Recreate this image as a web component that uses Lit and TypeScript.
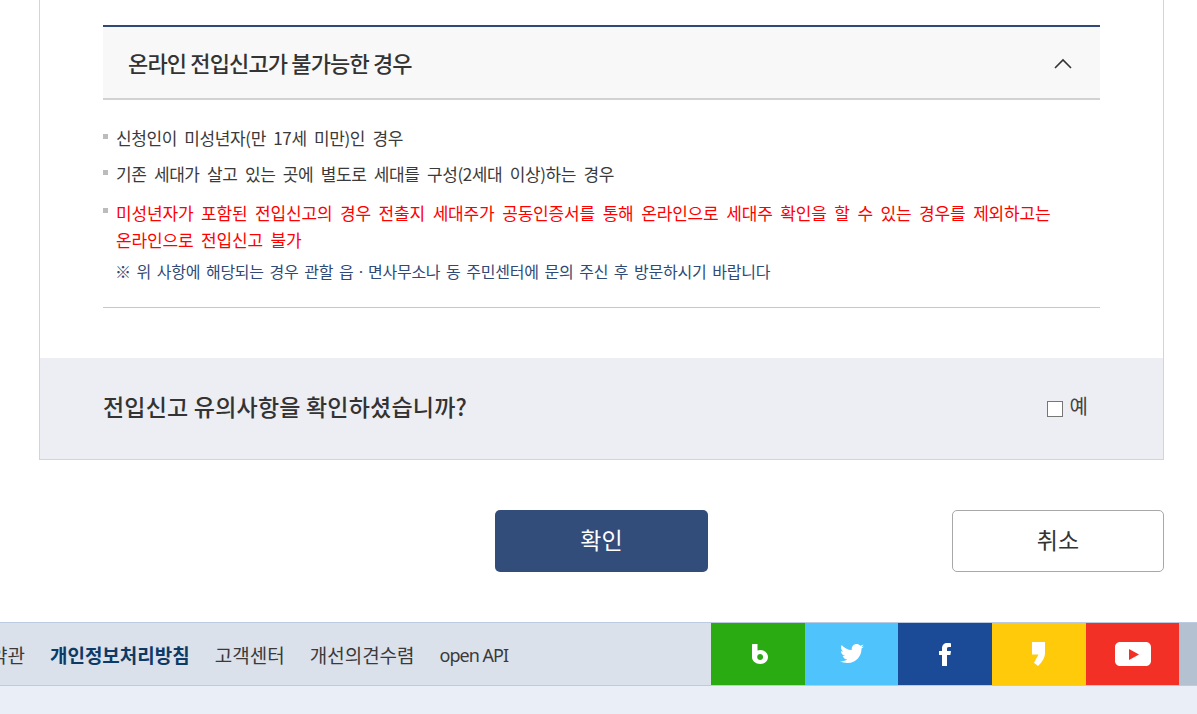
import { LitElement, html, css } from 'lit';
import { customElement } from 'lit/decorators.js';

const socials = [
  {
    color: '#2bab12',
    icon: html`<svg class="shift" width="16" height="20" viewBox="0 0 16 20"><path fill="#fff" fill-rule="evenodd" d="M1 0H5.500v6.500C6.300 6.200 7.200 6 8.100 6 12.500 6 16 9 16 13s-3.400 7-7.800 7C3.700 20 0 17.100 0 13V1C0 .4.400 0 1 0zM8.100 10C6.500 10 5.200 11.300 5.200 13s1.300 3 2.900 3 3-1.300 3-3-1.400-3-3-3z"/></svg>`,
  },
  {
    color: '#4fc3fb',
    icon: html`<svg width="24" height="20" viewBox="0 0 24 20"><path fill="#fff" d="M24 2.400c-.9.400-1.800.7-2.800.8 1-.6 1.800-1.600 2.200-2.700-1 .6-2 1-3.100 1.200C19.300.7 18 0 16.600 0c-2.700 0-4.900 2.200-4.900 4.900 0 .4 0 .8.100 1.100C7.700 5.800 4.100 3.900 1.700.9c-.4.700-.7 1.600-.7 2.500 0 1.700.9 3.200 2.200 4.100-.8 0-1.600-.2-2.200-.6v.1c0 2.400 1.700 4.400 3.900 4.800-.4.100-.8.200-1.300.2-.3 0-.6 0-.9-.1.600 2 2.400 3.400 4.600 3.400-1.700 1.300-3.800 2.100-6.100 2.100-.4 0-.8 0-1.200-.1C2.200 18.300 4.800 19 7.500 19c9.100 0 14-7.500 14-14v-.6c1-.7 1.800-1.500 2.500-2z"/></svg>`,
  },
  {
    color: '#1b4b97',
    icon: html`<svg width="12" height="23" viewBox="0 0 12 23"><path fill="#fff" d="M3 23V12H0V8h3V5.500C3 2 5 0 8.500 0c1.400 0 2.800.1 3.500.2v3.700H9.800C8.400 3.900 8 4.600 8 5.800V8h4l-.6 4H8v11z"/></svg>`,
  },
  {
    color: '#ffca09',
    icon: html`<svg width="13" height="24" viewBox="0 0 13 24"><path fill="#fff" d="M0 0h13v11c0 4.500-2.800 9-7 13l-4-3.200 4.500-8.300H0z"/></svg>`,
  },
  {
    color: '#f23026',
    icon: html`<svg width="36" height="24" viewBox="0 0 36 24"><path fill="#fff" fill-rule="evenodd" d="M5 0h26c2.800 0 5 2.200 5 5v14c0 2.800-2.200 5-5 5H5c-2.800 0-5-2.200-5-5V5c0-2.800 2.200-5 5-5zM14 7v11l10-5.500z"/></svg>`,
  },
];

@customElement('app-root')
export class AppRoot extends LitElement {
  static styles = css`
    :host {
      display: block;
      font-family: 'Noto Sans CJK KR', 'Noto Sans', sans-serif;
      color: #333;
      height: 714px;
      overflow: hidden;
      background: #fff;
    }

    .content {
      padding: 0 33px 0 39px;
    }

    .panel {
      border: 1px solid #d4d4d4;
      border-top: 0;
      padding-top: 25px;
    }

    .inner {
      margin: 0 63px;
    }

    .acc-head {
      height: 71px;
      border-top: 2px solid #2f4a77;
      border-bottom: 2px solid #d2d2d2;
      background: #f8f8f8;
      padding: 0 27px 0 25px;
      display: flex;
      align-items: center;
      justify-content: space-between;
    }

    .acc-head h3 {
      margin: 0 0 2px;
      font-size: 22px;
      line-height: 30px;
      font-weight: 500;
      letter-spacing: -0.85px;
    }

    .acc-body {
      border-bottom: 1px solid #c8c8c8;
      padding: 25px 0 23px;
    }

    ul {
      list-style: none;
      margin: 0;
      padding: 0;
    }

    li {
      position: relative;
      padding: 0 40px 0 13px;
      font-size: 17px;
      line-height: 26px;
      letter-spacing: -0.4px;
      word-spacing: 4px;
      word-break: keep-all;
      margin-bottom: 10px;
      color: #3a3a3a;
    }

    li::before {
      content: '';
      position: absolute;
      left: 0;
      top: 9px;
      width: 5px;
      height: 5px;
      background: #bcbcbc;
    }

    li.warn {
      color: #fe0000;
      line-height: 27px;
      letter-spacing: -0.17px;
      margin-top: 12px;
      margin-bottom: 5px;
    }

    .note {
      margin: 0 0 0 12px;
      font-size: 16px;
      line-height: 26px;
      letter-spacing: -0.24px;
      word-spacing: 2.4px;
      color: #2f4a77;
    }

    .confirm {
      margin-top: 50px;
      height: 95px;
      background: #edeef3;
      padding: 0 75px 6px 63px;
      display: flex;
      align-items: center;
      justify-content: space-between;
    }

    .confirm strong {
      font-size: 23px;
      font-weight: 500;
      letter-spacing: 0.2px;
    }

    .check {
      display: flex;
      align-items: center;
      gap: 7px;
      font-size: 20px;
      line-height: 28px;
      color: #444;
    }

    .box {
      width: 14px;
      height: 14px;
      border: 1px solid #767676;
      background: #fff;
      margin-top: 6px;
    }

    .actions {
      display: flex;
      justify-content: flex-end;
      gap: 244px;
      margin-top: 50px;
      height: 62px;
    }

    .btn {
      box-sizing: border-box;
      height: 62px;
      padding-bottom: 4px;
      border-radius: 5px;
      font: inherit;
      font-size: 23px;
      display: flex;
      align-items: center;
      justify-content: center;
    }

    .primary {
      width: 213px;
      background: #334d7a;
      color: #fff;
      border: 0;
    }

    .secondary {
      width: 212px;
      background: #fff;
      color: #333;
      border: 1px solid #a8a8a8;
    }

    .footer {
      margin-top: 50px;
      border-top: 1px solid #bccbe2;
      border-bottom: 1px solid #bccbe2;
      background: #dbe1eb;
      display: flex;
      height: 62px;
    }

    .links {
      width: 711px;
      flex: none;
      overflow: hidden;
      display: flex;
      justify-content: flex-end;
      align-items: center;
      gap: 25px;
      padding: 1px 203px 0 0;
      box-sizing: border-box;
      font-size: 19px;
      letter-spacing: 0;
      color: #3a3a3a;
      white-space: nowrap;
    }

    .links b {
      color: #0d3a66;
      font-weight: 700;
    }

    .links .api {
      font-family: 'Noto Sans', sans-serif;
      font-size: 18px;
      letter-spacing: -1px;
    }

    .social {
      display: grid;
      grid-template-columns: repeat(5, 93.7px);
    }

    .social a {
      display: flex;
      align-items: center;
      justify-content: center;
    }

    .shift {
      margin-left: 4px;
    }

    .rest {
      flex: 1;
      background: #b4c1d0;
    }

    .bottom {
      height: 28px;
      background: #e9eef7;
    }
  `;

  render() {
    return html`
      <div class="content">
        <section class="panel">
          <div class="inner">
            <div class="acc-head">
              <h3>온라인 전입신고가 불가능한 경우</h3>
              <svg width="20" height="14" viewBox="0 0 20 14">
                <path d="M2 12 L10 4 L18 12" fill="none" stroke="#333" stroke-width="1.6" />
              </svg>
            </div>
            <div class="acc-body">
              <ul>
                <li>신청인이 미성년자(만 17세 미만)인 경우</li>
                <li>기존 세대가 살고 있는 곳에 별도로 세대를 구성(2세대 이상)하는 경우</li>
                <li class="warn">
                  미성년자가 포함된 전입신고의 경우 전출지 세대주가 공동인증서를 통해 온라인으로 세대주 확인을 할 수 있는 경우를 제외하고는 온라인으로 전입신고 불가
                </li>
              </ul>
              <p class="note">※ 위 사항에 해당되는 경우 관할 읍ㆍ면사무소나 동 주민센터에 문의 주신 후 방문하시기 바랍니다</p>
            </div>
          </div>
          <div class="confirm">
            <strong>전입신고 유의사항을 확인하셨습니까?</strong>
            <label class="check"><span class="box"></span>예</label>
          </div>
        </section>
        <div class="actions">
          <div class="btn primary">확인</div>
          <div class="btn secondary">취소</div>
        </div>
      </div>
      <footer class="footer">
        <nav class="links">
          <span>이용약관</span>
          <b>개인정보처리방침</b>
          <span>고객센터</span>
          <span>개선의견수렴</span>
          <span class="api">open API</span>
        </nav>
        <div class="social">
          ${socials.map(s => html`<a style="background:${s.color}">${s.icon}</a>`)}
        </div>
        <div class="rest"></div>
      </footer>
      <div class="bottom"></div>
    `;
  }
}
